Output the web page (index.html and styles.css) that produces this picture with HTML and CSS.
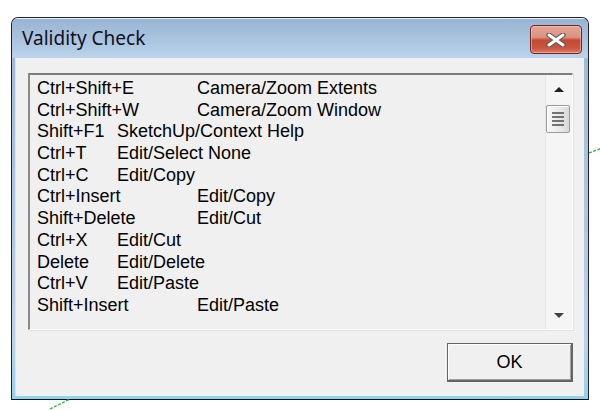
FILE: index.html
```html
<!DOCTYPE html>
<html>
<head>
<meta charset="utf-8">
<link rel="stylesheet" href="styles.css">
</head>
<body>
<div class="window">
  <div class="titlebar">
    <span class="title">Validity Check</span>
    <button class="close" aria-label="Close">
      <svg width="22" height="14" viewBox="0 0 22 14">
        <path d="M4 2 L18 12 M18 2 L4 12" stroke="#5a5a5a" stroke-width="5.2" stroke-linecap="round"/>
        <path d="M4 2 L18 12 M18 2 L4 12" stroke="#ffffff" stroke-width="3" stroke-linecap="round"/>
      </svg>
    </button>
  </div>
  <div class="client">
    <div class="listbox">
      <div class="list">
        <div class="row">Ctrl+Shift+E	Camera/Zoom Extents</div>
        <div class="row">Ctrl+Shift+W	Camera/Zoom Window</div>
        <div class="row">Shift+F1	SketchUp/Context Help</div>
        <div class="row">Ctrl+T	Edit/Select None</div>
        <div class="row">Ctrl+C	Edit/Copy</div>
        <div class="row">Ctrl+Insert	Edit/Copy</div>
        <div class="row">Shift+Delete	Edit/Cut</div>
        <div class="row">Ctrl+X	Edit/Cut</div>
        <div class="row">Delete	Edit/Delete</div>
        <div class="row">Ctrl+V	Edit/Paste</div>
        <div class="row">Shift+Insert	Edit/Paste</div>
      </div>
      <div class="scrollbar">
        <div class="sb-btn"><span class="tri up"></span></div>
        <div class="sb-track">
          <div class="thumb"><span></span><span></span><span></span><span></span></div>
        </div>
        <div class="sb-btn"><span class="tri down"></span></div>
      </div>
    </div>
    <div class="footer">
      <button class="ok">OK</button>
    </div>
  </div>
</div>
<svg class="deco deco-bl" width="24" height="14" viewBox="0 0 24 14"><path d="M2 12 L22 2" stroke="#22b43a" stroke-width="1.3" stroke-dasharray="3 1.5"/></svg>
<svg class="deco deco-r" width="14" height="10" viewBox="0 0 14 10"><path d="M0 7 L13 2" stroke="#22b43a" stroke-width="1.3" stroke-dasharray="3 1.5"/></svg>
</body>
</html>
```
FILE: styles.css
```css
html, body {
  margin: 0;
  padding: 0;
  background: #ffffff;
}
body {
  width: 600px;
  height: 410px;
  position: relative;
  overflow: hidden;
  padding-top: 17px;
  padding-left: 11px;
  box-sizing: border-box;
}
.window {
  width: 578px;
  height: 383px;
  box-sizing: border-box;
  border: 1px solid #202020;
  border-bottom-color: #101010;
  border-radius: 7px 7px 0 0;
  display: flex;
  flex-direction: column;
  background: linear-gradient(to bottom, #9cb7d5 0%, #bad2ea 85%, #8ed3f0 100%);
  overflow: hidden;
}
.titlebar {
  height: 40px;
  flex: none;
  display: flex;
  justify-content: space-between;
  align-items: flex-start;
  background: linear-gradient(to bottom, #99b4d2 0%, #a9c3de 50%, #bbd3eb 100%);
  border-top: 1px solid #eef4fb;
  box-sizing: border-box;
}
.title {
  font-family: "Noto Sans", sans-serif;
  font-size: 19px;
  color: #101020;
  margin-left: 10px;
  margin-top: 7px;
  line-height: 24px;
}
.close {
  margin: 6px 6px 0 0;
  width: 52px;
  height: 29px;
  padding: 0;
  border: 1px solid #6b2a2a;
  border-radius: 4px;
  background: linear-gradient(to bottom, #e6a496 0%, #dc9282 42%, #c34a33 52%, #c9553f 80%, #da7a63 100%);
  box-shadow: inset 0 0 0 1px rgba(255, 200, 190, 0.55);
  display: flex;
  align-items: center;
  justify-content: center;
}
.client {
  flex: 1;
  background: #f0f0f0;
  margin: 0 4px 3px 3px;
  border-left: 1px solid #d8e4f0;
  display: flex;
  flex-direction: column;
  padding: 15px 11px 0 12px;
  box-sizing: border-box;
}
.listbox {
  height: 257px;
  flex: none;
  box-sizing: border-box;
  border-top: 2px solid #7d7d7d;
  border-left: 2px solid #8a8a8a;
  border-right: 1px solid #ffffff;
  border-bottom: 1px solid #ffffff;
  box-shadow: 1px 1px 0 #e3e3e3;
  background: #f0f0f0;
  display: flex;
  overflow: hidden;
}
.list {
  flex: 1;
  padding: 3px 0 0 7px;
  font-family: "Liberation Sans", Arial, sans-serif;
  font-size: 18px;
  line-height: 21.7px;
  color: #000;
  overflow: hidden;
}
.row {
  height: 21.7px;
  white-space: pre;
  tab-size: 80px;
  -moz-tab-size: 80px;
}
.scrollbar {
  width: 27px;
  flex: none;
  display: flex;
  flex-direction: column;
  background: #f5f5f5;
  border-left: 1px solid #e6e6e6;
  box-sizing: border-box;
}
.sb-btn {
  height: 28px;
  display: flex;
  align-items: center;
  justify-content: center;
  flex: none;
}
.tri {
  width: 0;
  height: 0;
  border-left: 5px solid transparent;
  border-right: 5px solid transparent;
}
.tri.up {
  border-bottom: 5px solid #202020;
}
.tri.down {
  border-top: 5px solid #404040;
}
.sb-track {
  flex: 1;
  padding-top: 2px;
}
.thumb {
  width: 24px;
  height: 28px;
  box-sizing: border-box;
  border: 1px solid #9a9a9a;
  border-radius: 2px;
  background: linear-gradient(to right, #f8f8f8 0%, #ececec 50%, #d8d8d8 100%);
  box-shadow: inset 1px 1px 0 #ffffff;
  display: flex;
  flex-direction: column;
  align-items: center;
  justify-content: center;
  gap: 2px;
}
.thumb span {
  display: block;
  width: 12px;
  height: 2px;
  background: #555;
  opacity: 0.8;
}
.footer {
  display: flex;
  justify-content: flex-end;
  padding-top: 13px;
}
.ok {
  width: 126px;
  height: 39px;
  box-sizing: border-box;
  border: 1px solid #646464;
  border-right-width: 2px;
  border-bottom-width: 2px;
  background: #f0f0f0;
  box-shadow: inset 1px 1px 0 #ffffff, inset -1px -1px 0 #a0a0a0;
  font-family: "Liberation Sans", Arial, sans-serif;
  font-size: 18px;
  color: #000;
  padding: 0;
}
.deco {
  position: absolute;
}
.deco-bl {
  left: 48px;
  top: 397px;
}
.deco-r {
  left: 589px;
  top: 146px;
}
```
